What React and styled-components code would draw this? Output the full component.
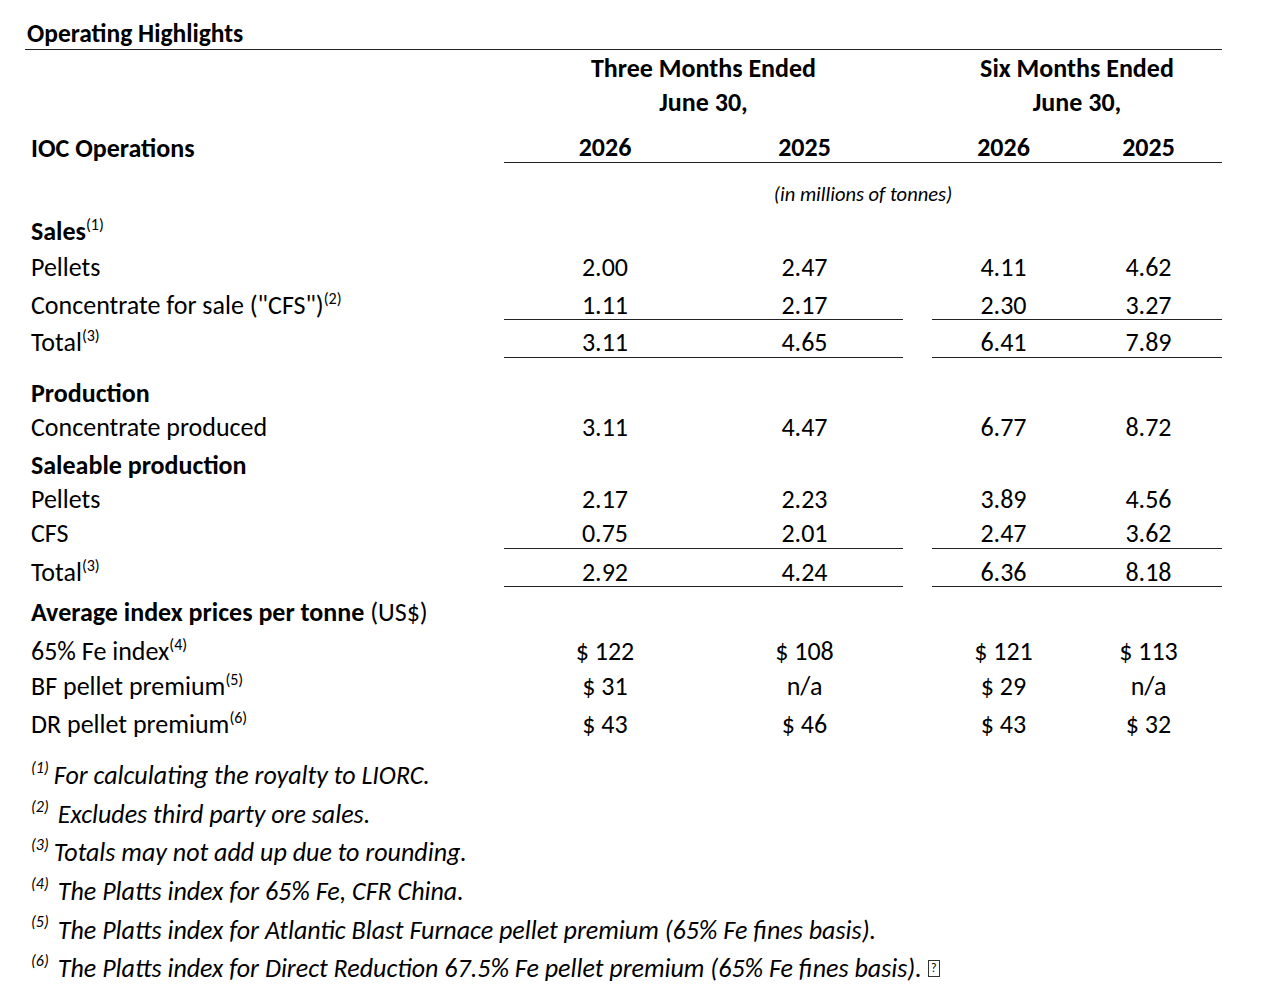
import React from "react";
import styled, { createGlobalStyle } from "styled-components";

const GlobalStyle = createGlobalStyle`
  html, body {
    margin: 0;
    padding: 0;
    background: #fff;
  }
  body {
    font-family: Carlito, Lato, "Open Sans", sans-serif;
    color: #000;
  }
`;

const COLS = "479px 202px 197px 29px 143px 147px";
const RULE = "1.5px solid #222";

const Page = styled.div`
  width: 1197px;
  padding: 15px 0 0 25px;
`;

const Title = styled.div`
  height: 35px;
  box-sizing: border-box;
  display: flex;
  align-items: flex-end;
  padding: 0 0 4px 2px;
  border-bottom: ${RULE};
  font-size: 25.5px;
  font-weight: 700;
  line-height: 22px;
`;

const Row = styled.div`
  display: grid;
  grid-template-columns: ${COLS};
  height: ${(p) => p.$h}px;
`;

const Cell = styled.div`
  box-sizing: border-box;
  display: flex;
  align-items: ${(p) => (p.$end ? "flex-end" : "center")};
  justify-content: ${(p) => (p.$label ? "flex-start" : "center")};
  padding-top: ${(p) => p.$pt || 0}px;
  padding-bottom: ${(p) => p.$pb || 0}px;
  padding-left: ${(p) => (p.$label ? 6 : 0)}px;
  grid-column: ${(p) => p.$span || "auto"};
  font-size: ${(p) => (p.$small ? 20.5 : 26)}px;
  font-weight: ${(p) => (p.$bold ? 700 : 400)};
  font-style: ${(p) => (p.$italic ? "italic" : "normal")};
  line-height: 22px;
  white-space: nowrap;
  border-bottom: ${(p) => (p.$rule ? RULE : "none")};
`;

const Sup = styled.sup`
  font-size: 16px;
  line-height: 0;
  vertical-align: 10px;
  font-weight: 400;
`;

const Light = styled.span`
  font-weight: 400;
`;

const Notes = styled.div`
  margin-top: 11px;
  padding-left: 6px;
`;

const Note = styled.div`
  height: 38.6px;
  display: flex;
  align-items: center;
  font-size: 26px;
  font-style: italic;
  line-height: 22px;
  white-space: nowrap;
`;

const NoteMark = styled.span`
  font-size: 16px;
  align-self: flex-start;
  margin-top: 1px;
  margin-right: ${(p) => p.$gap}px;
`;

const Tofu = styled.span`
  display: inline-flex;
  align-items: center;
  justify-content: center;
  width: 10px;
  height: 15px;
  margin-left: 6px;
  border: 1px solid #333;
  font-size: 12px;
  font-style: normal;
  line-height: 1;
`;

const rows = [
  { h: 37, label: "Sales", sup: "1", bold: true },
  { h: 35, label: "Pellets", v: ["2.00", "2.47", "4.11", "4.62"] },
  { h: 36, pt: 6, label: 'Concentrate for sale ("CFS")', sup: "2", v: ["1.11", "2.17", "2.30", "3.27"], under: true },
  { h: 38, pt: 6, label: "Total", sup: "3", v: ["3.11", "4.65", "6.41", "7.89"], under: true },
  { h: 52, pt: 18, label: "Production", bold: true },
  { h: 34, label: "Concentrate produced", v: ["3.11", "4.47", "6.77", "8.72"] },
  { h: 39, pt: 3, label: "Saleable production", bold: true },
  { h: 33, pt: -1, label: "Pellets", v: ["2.17", "2.23", "3.89", "4.56"] },
  { h: 33, pt: 1, label: "CFS", v: ["0.75", "2.01", "2.47", "3.62"], under: true },
  { h: 38, pt: 8, label: "Total", sup: "3", v: ["2.92", "4.24", "6.36", "8.18"], under: true },
  { h: 46, pt: 4, label: "Average index prices per tonne", extra: " (US$)", bold: true },
  { h: 36, label: "65% Fe index", sup: "4", v: ["$ 122", "$ 108", "$ 121", "$ 113"] },
  { h: 34, label: "BF pellet premium", sup: "5", v: ["$ 31", "n/a", "$ 29", "n/a"] },
  { h: 42, label: "DR pellet premium", sup: "6", v: ["$ 43", "$ 46", "$ 43", "$ 32"] },
];

const notes = [
  ["1", 5, "For calculating the royalty to LIORC."],
  ["2", 9, "Excludes third party ore sales."],
  ["3", 5, "Totals may not add up due to rounding."],
  ["4", 9, "The Platts index for 65% Fe, CFR China."],
  ["5", 9, "The Platts index for Atlantic Blast Furnace pellet premium (65% Fe fines basis)."],
  ["6", 9, "The Platts index for Direct Reduction 67.5% Fe pellet premium (65% Fe fines basis)."],
];

function DataRow({ row }) {
  const vals = row.v || ["", "", "", ""];
  const pt = Math.max(row.pt || 0, 0);
  const pb = row.pt < 0 ? -row.pt * 2 : 0;
  return (
    <Row $h={row.h}>
      <Cell $label $bold={row.bold} $pt={pt} $pb={pb}>
        <span>
          {row.label}
          {row.sup && <Sup>({row.sup})</Sup>}
          {row.extra && <Light>{row.extra}</Light>}
        </span>
      </Cell>
      <Cell $pt={pt} $pb={pb} $rule={row.under}>{vals[0]}</Cell>
      <Cell $pt={pt} $pb={pb} $rule={row.under}>{vals[1]}</Cell>
      <Cell />
      <Cell $pt={pt} $pb={pb} $rule={row.under}>{vals[2]}</Cell>
      <Cell $pt={pt} $pb={pb} $rule={row.under}>{vals[3]}</Cell>
    </Row>
  );
}

export default function App() {
  return (
    <Page>
      <GlobalStyle />
      <Title>Operating Highlights</Title>

      <Row $h={35}>
        <Cell />
        <Cell $bold $span="2 / 4">Three Months Ended</Cell>
        <Cell />
        <Cell $bold $span="5 / 7">Six Months Ended</Cell>
      </Row>
      <Row $h={33}>
        <Cell />
        <Cell $bold $span="2 / 4">June 30,</Cell>
        <Cell />
        <Cell $bold $span="5 / 7">June 30,</Cell>
      </Row>
      <Row $h={45}>
        <Cell $label $bold $end $pb={4}>IOC Operations</Cell>
        <Cell $bold $end $pb={4} $rule>2026</Cell>
        <Cell $bold $end $pb={4} $rule>2025</Cell>
        <Cell $end $rule />
        <Cell $bold $end $pb={4} $rule>2026</Cell>
        <Cell $bold $end $pb={4} $rule>2025</Cell>
      </Row>
      <Row $h={49}>
        <Cell />
        <Cell $italic $small $end $pb={7} $span="2 / 7">
          (in millions of tonnes)
        </Cell>
      </Row>

      {rows.map((row, i) => (
        <DataRow key={i} row={row} />
      ))}

      <Notes>
        {notes.map(([n, gap, text], i) => (
          <Note key={n}>
            <NoteMark $gap={gap}>({n})</NoteMark>
            {text}
            {i === notes.length - 1 && <Tofu>?</Tofu>}
          </Note>
        ))}
      </Notes>
    </Page>
  );
}
